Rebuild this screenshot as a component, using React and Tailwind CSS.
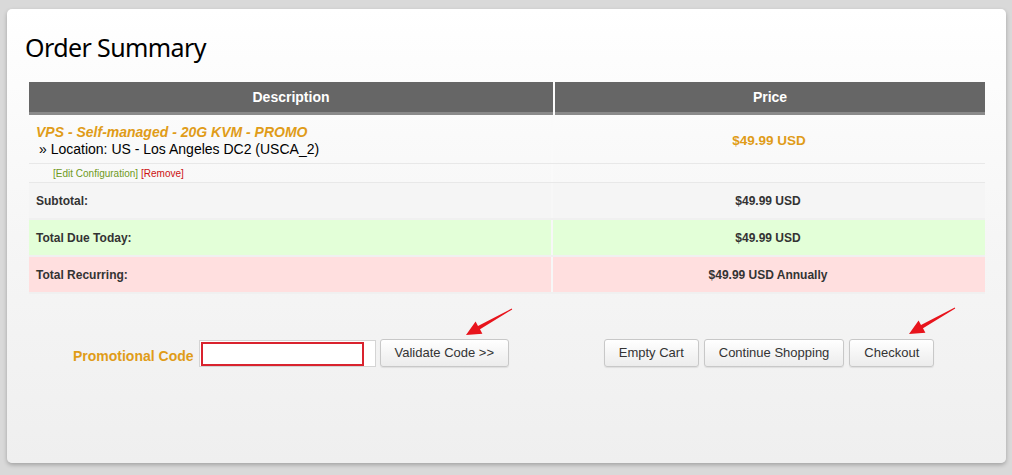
// Cart summary page: order table, totals and checkout actions
const rows = [
  { label: 'Subtotal:', value: '$49.99 USD', bg: 'bg-[#f5f5f5]' },
  { label: 'Total Due Today:', value: '$49.99 USD', bg: 'bg-[#e3ffd8]' },
  { label: 'Total Recurring:', value: '$49.99 USD Annually', bg: 'bg-[#ffdfdf]' },
];

const Arrow = ({ className }) => (
  <svg className={className} width="50" height="32" viewBox="0 0 50 32">
    <polygon
      points="2,29 11.6,15.5 14,19.9 47.8,2.6 48.2,3.4 16,23.3 18.4,27.7"
      fill="#e8141c"
    />
  </svg>
);

const Btn = ({ children }) => (
  <button className="h-[28px] px-[14px] rounded-[3px] border border-[#c8c8c8] bg-gradient-to-b from-white to-[#ececec] text-[13px] text-[#333] shadow-[0_1px_1px_rgba(0,0,0,0.08)]">
    {children}
  </button>
);

export default function App() {
  return (
    <div className="h-[475px] w-[1012px] bg-[#d9d9d9] pt-[9px] pl-[7px] font-['Liberation_Sans',Arial,sans-serif]">
      <div className="relative w-[999px] h-[454px] rounded-[5px] bg-gradient-to-b from-white via-[#f6f6f6] to-[#efefef] shadow-[0_2px_4px_rgba(0,0,0,0.25)] pl-[22px] pr-[21px]">
        <h1 className="pt-[20px] -ml-[4px] text-[25px] leading-[36px] text-black font-['Noto_Sans','Open_Sans',sans-serif] tracking-[-0.6px]">
          Order Summary
        </h1>

        <div className="mt-[17px] w-[956px]">
          {/* header */}
          <div className="flex gap-[2px] text-[14px] font-bold text-white">
            <div className="w-[524px] h-[33px] bg-[#666] border-b-[3px] border-[#8a8a8a] flex items-center justify-center">Description</div>
            <div className="w-[430px] h-[33px] bg-[#666] border-b-[3px] border-[#8a8a8a] flex items-center justify-center">Price</div>
          </div>

          {/* product */}
          <div className="flex border-b border-[#e8e8e8]">
            <div className="w-[524px] h-[48px] pl-[7px] pt-[9px] border-r-2 border-[#fafafa] text-[14px] leading-[17px]">
              <div className="font-bold italic text-[#e09c18]">VPS - Self-managed - 20G KVM - PROMO</div>
              <div className="text-black pl-[3px]">» Location: US - Los Angeles DC2 (USCA_2)</div>
            </div>
            <div className="w-[432px] flex items-center justify-center pt-[4px] text-[13.5px] font-bold text-[#e09c18]">$49.99 USD</div>
          </div>
          <div className="flex h-[19px] border-b border-[#e8e8e8]">
            <div className="w-[524px] pl-[24px] flex items-center text-[10px] border-r-2 border-[#fafafa]">
              <span className="text-[#6f9a1c]">[Edit Configuration]</span>
              <span className="ml-[3px] text-[#cc1111]">[Remove]</span>
            </div>
          </div>

          {rows.map((r) => (
            <div key={r.label} className={`flex h-[37px] border-b-2 border-[#f0f0f0] ${r.bg}`}>
              <div className="w-[524px] pl-[7px] flex items-center text-[12px] font-bold text-[#333] border-r-2 border-[#f7f7f7]">{r.label}</div>
              <div className="w-[430px] flex items-center justify-center text-[12px] font-bold text-[#333]">{r.value}</div>
            </div>
          ))}
        </div>

        {/* promo code + cart actions */}
        <div className="mt-[45px] flex w-[956px]">
          <div className="w-[524px] flex items-center justify-center">
            <span className="text-[14px] font-bold text-[#e09c18] mt-[6px] mr-[5px]">Promotional Code</span>
            <div className="relative w-[177px] h-[27px] bg-white border border-[#d4d4d4] mt-[1px]">
              <div className="absolute left-[1px] top-[1px] w-[163px] h-[24px] border-2 border-[#d9232e]" />
            </div>
            <div className="ml-[4px]">
              <Btn>Validate Code &gt;&gt;</Btn>
            </div>
          </div>
          <div className="w-[432px] flex items-center justify-center gap-[5px]">
            <Btn>Empty Cart</Btn>
            <Btn>Continue Shopping</Btn>
            <Btn>Checkout</Btn>
          </div>
        </div>

        <Arrow className="absolute left-[457px] top-[297px]" />
        <Arrow className="absolute left-[900px] top-[296px]" />
      </div>
    </div>
  );
}
